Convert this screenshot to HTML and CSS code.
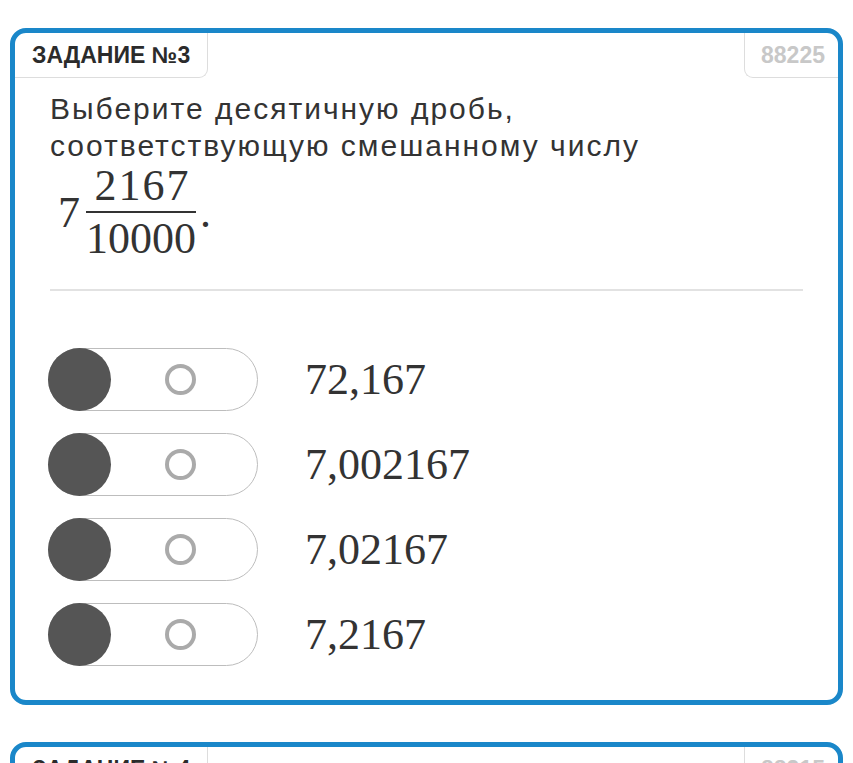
FILE: index.html
```html
<!DOCTYPE html>
<html lang="ru">
<head>
    <meta charset="UTF-8">
    <meta name="viewport" content="width=device-width, initial-scale=1.0">
    <title>Задание №3</title>
    <link rel="stylesheet" href="styles.css">
</head>
<body>
    <div class="zadanie">
        <div class="shapka">
            <div class="nomer">ЗАДАНИЕ №3</div>
            <div class="kod">88225</div>
        </div>
        <div class="vopros">
            <p class="tekst">Выберите десятичную дробь, соответствующую смешанному числу</p>
            <div class="formula">
                <span class="celoe">7</span>
                <span class="drob">
                    <span class="chisl">2167</span>
                    <span class="znam">10000</span>
                </span>
                <span class="tochka">.</span>
            </div>
        </div>
        <div class="liniya"></div>
        <div class="otvety">
            <div class="otvet">
                <div class="pereklyuchatel"><span class="krug"></span><span class="kolco"></span></div>
                <span class="chislo">72,167</span>
            </div>
            <div class="otvet">
                <div class="pereklyuchatel"><span class="krug"></span><span class="kolco"></span></div>
                <span class="chislo">7,002167</span>
            </div>
            <div class="otvet">
                <div class="pereklyuchatel"><span class="krug"></span><span class="kolco"></span></div>
                <span class="chislo">7,02167</span>
            </div>
            <div class="otvet">
                <div class="pereklyuchatel"><span class="krug"></span><span class="kolco"></span></div>
                <span class="chislo">7,2167</span>
            </div>
        </div>
    </div>

    <div class="zadanie">
        <div class="shapka">
            <div class="nomer">ЗАДАНИЕ №4</div>
            <div class="kod">88215</div>
        </div>
        <div class="vopros">
            <p class="tekst">Выберите десятичную дробь</p>
        </div>
    </div>
</body>
</html>
```

FILE: styles.css
```css
* {
    box-sizing: border-box;
}

body {
    margin: 0;
    padding: 28px 10px 0 10px;
    background-color: white;
    font-family: "Liberation Sans", Arial, sans-serif;
    color: #333;
}

.zadanie {
    border: 5px solid #1a87c9;
    border-radius: 16px;
    margin-bottom: 37px;
    padding-bottom: 34px;
}

.zadanie .shapka {
    display: flex;
    justify-content: space-between;
    height: 45px;
}

.zadanie .shapka .nomer {
    padding: 0 17px;
    font-size: 23px;
    font-weight: bold;
    line-height: 44px;
    color: #2b2b2b;
    border-right: 1px solid #ddd;
    border-bottom: 1px solid #ddd;
    border-bottom-right-radius: 9px;
}

.zadanie .shapka .kod {
    padding: 0 13px 0 16px;
    font-size: 23px;
    font-weight: bold;
    line-height: 44px;
    color: #c8c8c8;
    border-left: 1px solid #ddd;
    border-bottom: 1px solid #ddd;
    border-bottom-left-radius: 9px;
}

.zadanie .vopros {
    padding: 12px 35px 0 35px;
}

.zadanie .vopros .tekst {
    margin: 0;
    font-size: 30px;
    line-height: 37px;
    letter-spacing: 2px;
    max-width: 700px;
}

.zadanie .formula {
    display: flex;
    align-items: center;
    margin-left: 8px;
    font-family: "Liberation Serif", "Times New Roman", serif;
    font-size: 44px;
    line-height: 44px;
    color: #333;
}

.zadanie .formula .celoe {
    margin-right: 6px;
}

.zadanie .formula .drob {
    display: flex;
    flex-direction: column;
    align-items: center;
}

.zadanie .formula .chisl {
    padding: 0 0 3px 3px;
    border-bottom: 2px solid #333;
    width: 100%;
    text-align: center;
    letter-spacing: 2px;
}

.zadanie .formula .znam {
    padding-top: 4px;
}

.zadanie .formula .tochka {
    margin-left: 4px;
}

.zadanie .liniya {
    height: 2px;
    margin: 28px 35px 57px 35px;
    background-color: #e2e2e2;
}

.zadanie .otvety {
    display: flex;
    flex-direction: column;
    gap: 22px;
    padding-left: 33px;
}

.zadanie .otvet {
    display: flex;
    align-items: center;
}

.zadanie .otvet .pereklyuchatel {
    width: 210px;
    height: 63px;
    border: 1px solid #bdbdbd;
    border-radius: 32px;
    display: flex;
    align-items: center;
}

.zadanie .otvet .krug {
    width: 63px;
    height: 63px;
    margin-left: -1px;
    border-radius: 50%;
    background-color: #555;
}

.zadanie .otvet .kolco {
    width: 31px;
    height: 31px;
    margin-left: 54px;
    border: 4px solid #aaa;
    border-radius: 50%;
}

.zadanie .otvet .chislo {
    margin-left: 47px;
    font-family: "Liberation Serif", "Times New Roman", serif;
    font-size: 44px;
    color: #333;
}
```
